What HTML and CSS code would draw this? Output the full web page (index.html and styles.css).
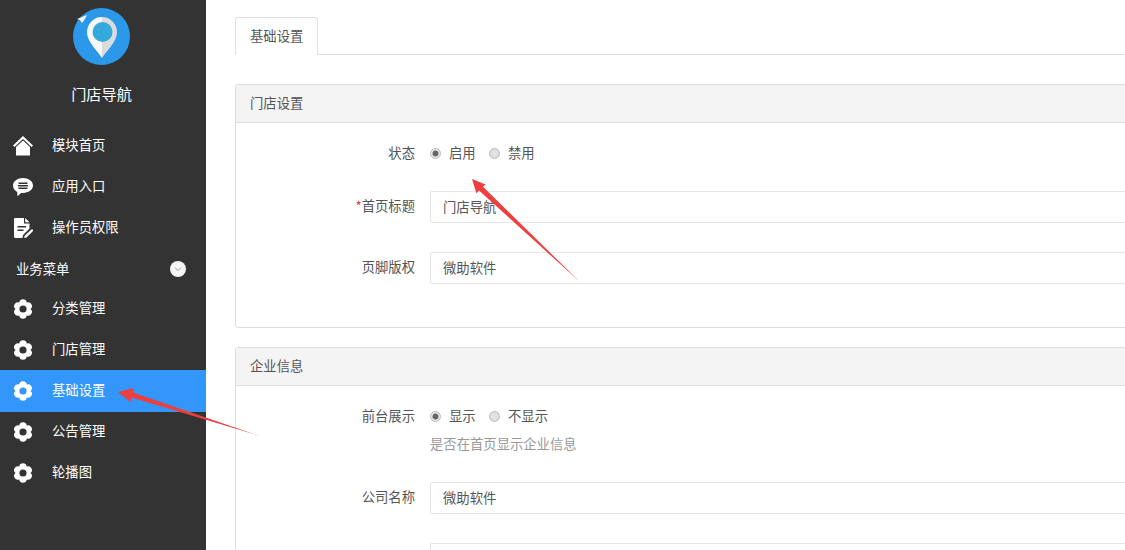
FILE: index.html
```html
<!DOCTYPE html>
<html lang="zh-CN">
<head>
<meta charset="utf-8">
<title>门店导航</title>
<link rel="stylesheet" href="styles.css">
</head>
<body>
<svg width="0" height="0" class="defs">
  <defs>
    <symbol id="gear" viewBox="0 0 20 20">
      <path fill-rule="evenodd" d="M6.25 3.500A3.800 3.800 0 0 1 13.750 3.500A3.800 3.800 0 0 1 17.500 10A3.800 3.800 0 0 1 13.750 16.500A3.800 3.800 0 0 1 6.250 16.500A3.800 3.800 0 0 1 2.500 10A3.800 3.800 0 0 1 6.250 3.500ZM10 6.400A3.600 3.600 0 1 0 10 13.600A3.600 3.600 0 1 0 10 6.400Z"/>
    </symbol>
  </defs>
</svg>
<div class="app">
  <aside class="sidebar">
    <div class="brand">
      <svg class="logo" viewBox="0 0 57 57" width="57" height="57">
        <circle cx="28.5" cy="28.5" r="28.5" fill="#2b98ea"/>
        <path d="M4 11L14 7L11.500 11.500L9 15L7 12Z" fill="#f2f6fa"/>
        <path d="M29 50C24 42 14 34 14 24A15 15 0 0 1 29 9Z" fill="#f7f8f9"/>
        <path d="M29 50C34 42 44 34 44 24A15 15 0 0 0 29 9Z" fill="#dadbdc"/>
        <circle cx="29.5" cy="24" r="10" fill="#35a9dc"/>
      </svg>
      <div class="brand-name">门店导航</div>
    </div>
    <nav class="menu">
      <a class="item">
        <svg class="ico" viewBox="0 0 20 20"><path d="M10 0L20 9.500L18.600 11L10 3L1.400 11L0 9.500Z"/><path d="M10 4.600L17 11V19.500H3V11Z"/></svg>
        <span class="text">模块首页</span>
      </a>
      <a class="item">
        <svg class="ico" viewBox="0 0 20 20"><path fill-rule="evenodd" d="M10 1C15.500 1 20 4.200 20 8.600C20 13 15.500 16 10 16C9.300 16 8.700 16 8 15.900L4.500 19.300L4.200 15C1.700 13.600 0 11.400 0 8.600C0 4.200 4.500 1 10 1ZM5.500 5.500V7H14.500V5.500ZM5 8V9.500H15V8ZM5.500 10.500V12H14.500V10.500Z"/></svg>
        <span class="text">应用入口</span>
      </a>
      <a class="item">
        <svg class="ico" viewBox="0 0 20 20"><path fill-rule="evenodd" d="M2 0H11V5.500H16.500V10.500L10 17L9.500 20H2.500C1.500 20 1 19.400 1 18.500V1.500C1 .6 1.300 0 2 0ZM12.200 0L16.500 4.300H12.200ZM4.500 8V9.500H13V8ZM4.500 11.500V13H10.500V11.500ZM19 11L20.500 12.500L13.500 19.500L11.200 20L11.700 17.800Z"/></svg>
        <span class="text">操作员权限</span>
      </a>
      <div class="group">
        <span>业务菜单</span>
        <span class="toggle"><svg viewBox="0 0 16 16" width="16" height="16"><path d="M5.200 6.800L8 9.600L10.800 6.800" fill="none" stroke="#999" stroke-width="1"/></svg></span>
      </div>
      <a class="item"><svg class="ico"><use href="#gear"/></svg><span class="text">分类管理</span></a>
      <a class="item"><svg class="ico"><use href="#gear"/></svg><span class="text">门店管理</span></a>
      <a class="item active"><svg class="ico"><use href="#gear"/></svg><span class="text">基础设置</span></a>
      <a class="item"><svg class="ico"><use href="#gear"/></svg><span class="text">公告管理</span></a>
      <a class="item"><svg class="ico"><use href="#gear"/></svg><span class="text">轮播图</span></a>
    </nav>
  </aside>
  <main class="main">
    <div class="tabs"><div class="tab">基础设置</div></div>
    <section class="panel first">
      <header class="panel-head">门店设置</header>
      <div class="panel-body">
        <div class="row short">
          <label class="label">状态</label>
          <div class="radios">
            <span class="radio on"></span><span class="opt">启用</span>
            <span class="radio"></span><span class="opt">禁用</span>
          </div>
        </div>
        <div class="row">
          <label class="label"><em>*</em>首页标题</label>
          <input class="input" value="门店导航">
        </div>
        <div class="row">
          <label class="label">页脚版权</label>
          <input class="input" value="微助软件">
        </div>
      </div>
    </section>
    <section class="panel">
      <header class="panel-head">企业信息</header>
      <div class="panel-body">
        <div class="row short">
          <label class="label">前台展示</label>
          <div class="radios">
            <span class="radio on"></span><span class="opt">显示</span>
            <span class="radio"></span><span class="opt">不显示</span>
          </div>
        </div>
        <p class="help">是否在首页显示企业信息</p>
        <div class="row">
          <label class="label">公司名称</label>
          <input class="input" value="微助软件">
        </div>
        <div class="row">
          <label class="label"></label>
          <input class="input">
        </div>
      </div>
    </section>
  </main>
</div>
<svg class="annot" viewBox="0 0 1125 550" width="1125" height="550">
  <path d="M472 179L485.500 184.500L483 186.800L580 282L479 190.500L476.500 193.500Z" fill="#ee3f3f"/>
  <path d="M118 392L133.500 388L133 392.500L260 436L131.500 397.500L130.500 402Z" fill="#ee3f3f"/>
</svg>
</body>
</html>
```
FILE: styles.css
```css
* { box-sizing: border-box; }
html, body { margin: 0; height: 550px; overflow: hidden; background: #fff; }
body {
  position: relative;
  font: 13.33px/20px "Noto Sans CJK SC", "Liberation Sans", sans-serif;
  color: #555;
}
.defs { position: absolute; }
.app { display: flex; height: 550px; }

.sidebar { width: 206px; flex: none; background: #333; color: #fff; }
.brand { height: 125px; padding-top: 8px; display: flex; flex-direction: column; align-items: center; }
.logo { display: block; margin-left: -3px; }
.brand-name { margin: 17px 0 0 -3px; font-size: 15.2px; line-height: 22px; }
.menu { display: flex; flex-direction: column; }
.item { height: 41px; display: flex; align-items: center; gap: 19px; padding-left: 13px; color: #fff; }
.item.active { background: #3296fa; height: 42px; margin-bottom: -1px; padding-bottom: 1px; }
.ico { width: 20px; height: 20px; fill: #fff; flex: none; }
.text { padding-bottom: 2px; }
.group { height: 40px; display: flex; align-items: center; justify-content: space-between; padding: 2px 20px 0 16px; }
.toggle { width: 16px; height: 16px; border-radius: 50%; background: #f4f4f4; display: block; }
.toggle svg { display: block; }

.main { flex: 1; min-width: 0; overflow: hidden; padding: 17px 0 0 29px; }
.tabs { width: 1000px; height: 38px; border-bottom: 1px solid #ddd; display: flex; }
.tab {
  width: 83px; height: 38px; padding-left: 14px;
  border: 1px solid #e0e0e0; border-bottom: 0; border-radius: 3px 3px 0 0;
  background: #fff; line-height: 35px; color: #555;
}
.panel { width: 1000px; margin-top: 19px; border: 1px solid #ddd; border-radius: 3px; }
.panel.first { margin-top: 29px; height: 244px; }
.panel-head { height: 38px; padding-left: 14px; background: #f4f4f4; border-bottom: 1px solid #ddd; line-height: 35px; color: #555; }
.panel-body { padding-top: 20px; }
.row { display: flex; align-items: center; height: 32px; margin-bottom: 29px; }
.row.short { height: 20px; margin-bottom: 28px; }
.label { width: 179px; flex: none; padding-bottom: 2px; text-align: right; color: #555; }
.row.short .label { padding-bottom: 0; }
.label em { font-style: normal; color: #e33; }
.radios { display: flex; align-items: center; margin-left: 15px; }
.radio {
  width: 11px; height: 11px; border-radius: 50%; flex: none;
  border: 1px solid #bbb; background: radial-gradient(circle, #e6e6e6, #d8d8d8); margin-right: 8px;
}
.radio.on { background: radial-gradient(circle, #666 0 2.6px, #e8e8e8 3.4px); }
.opt { margin-right: 13.4px; color: #555; }
.input {
  margin-left: 15px; width: 760px; height: 32px; padding: 0 12px 1px;
  border: 1px solid #e5e5e5; border-radius: 2px; outline: 0;
  font: inherit; color: #555; background: #fff;
}
.help { margin: -20px 0 28px 194px; color: #999; line-height: 20px; }
.annot { position: absolute; left: 0; top: 0; pointer-events: none; }
```
